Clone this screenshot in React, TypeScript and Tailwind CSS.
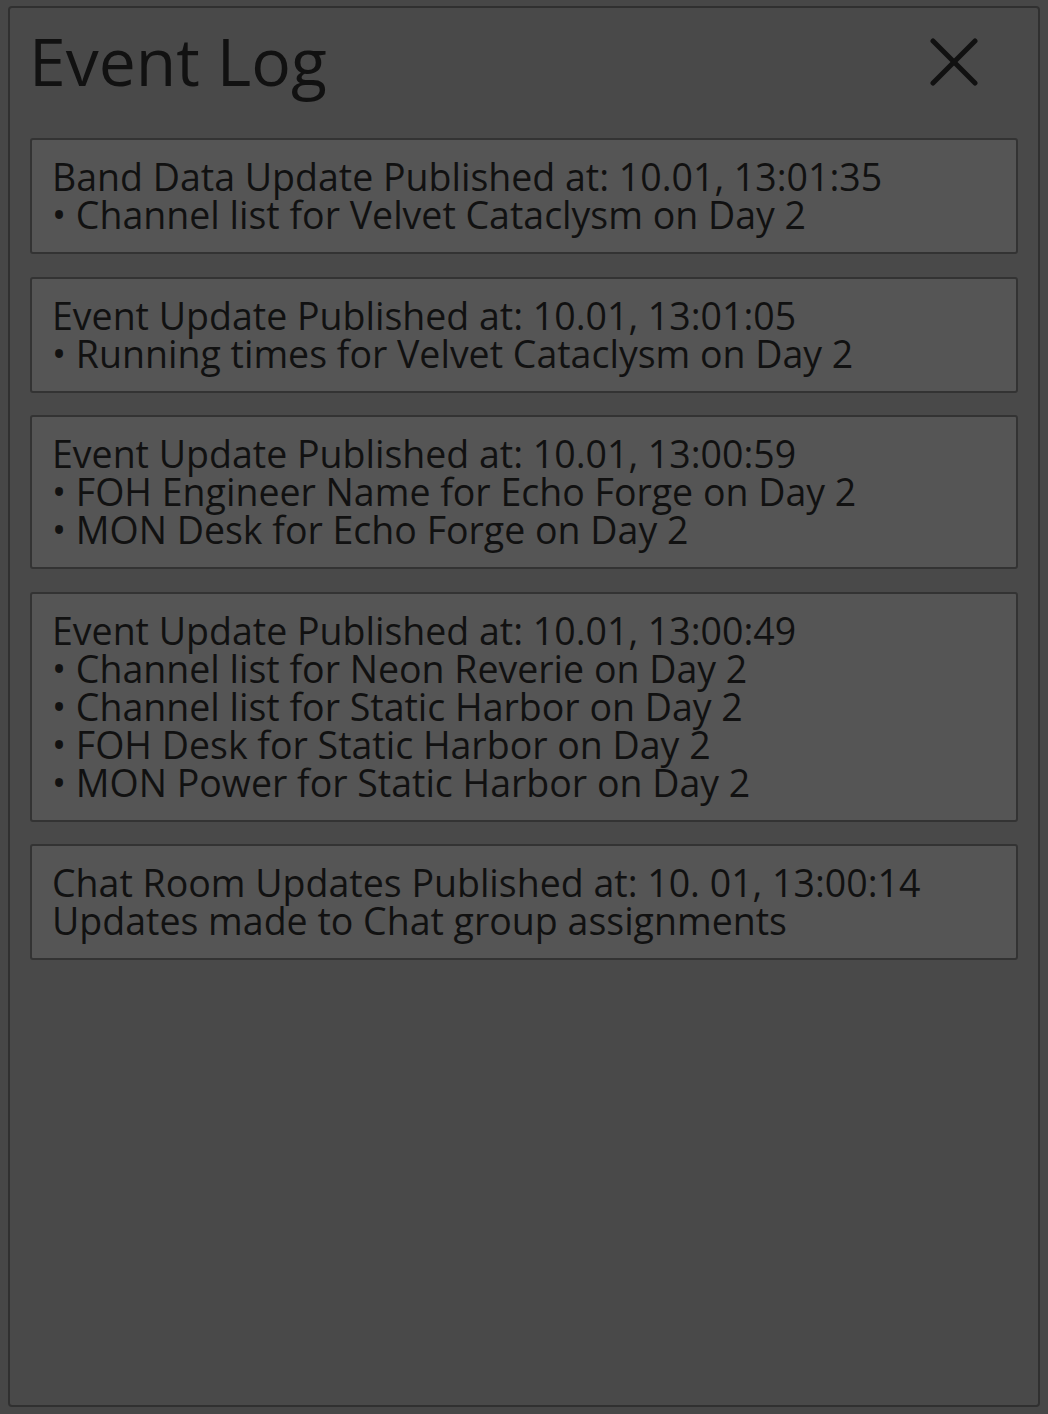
import React from "react";

const entries: { title: string; lines: string[] }[] = [
  {
    title: "Band Data Update Published at: 10.01, 13:01:35",
    lines: ["• Channel list for Velvet Cataclysm on Day 2"],
  },
  {
    title: "Event Update Published at: 10.01, 13:01:05",
    lines: ["• Running times for Velvet Cataclysm on Day 2"],
  },
  {
    title: "Event Update Published at: 10.01, 13:00:59",
    lines: ["• FOH Engineer Name for Echo Forge on Day 2", "• MON Desk for Echo Forge on Day 2"],
  },
  {
    title: "Event Update Published at: 10.01, 13:00:49",
    lines: [
      "• Channel list for Neon Reverie on Day 2",
      "• Channel list for Static Harbor on Day 2",
      "• FOH Desk for Static Harbor on Day 2",
      "• MON Power for Static Harbor on Day 2",
    ],
  },
  {
    title: "Chat Room Updates Published at: 10. 01, 13:00:14",
    lines: ["Updates made to Chat group assignments"],
  },
];

export default function App() {
  return (
    <div
      className="w-[1048px] h-[1414px] bg-[#474747] pt-[6px] pl-[8px] pr-[8px] pb-[7px] flex"
      style={{ fontFamily: '"Open Sans", "Noto Sans", sans-serif' }}
    >
      <div className="flex-1 flex flex-col bg-[#494949] border-2 border-[#303030] rounded-[4px] px-[20px]">
        <div className="h-[110px] flex items-center justify-between">
          <h1 className="text-[66px] leading-none text-[#111111] -ml-[1px] -mt-[7px]">Event Log</h1>
          <svg
            width="48"
            height="48"
            viewBox="0 0 48 48"
            className="mr-[40px] -mt-[2px]"
            stroke="#111111"
            strokeWidth="5"
            strokeLinecap="round"
          >
            <line x1="3" y1="3" x2="45" y2="45" />
            <line x1="45" y1="3" x2="3" y2="45" />
          </svg>
        </div>
        <div className="mt-[20px] flex flex-col gap-[22.5px]">
          {entries.map((e, i) => (
            <div
              key={i}
              className="bg-[#555555] border-2 border-[#333333] rounded-[3px] pl-[20px] pr-[20px] pt-[18px] pb-[18px] text-[37.5px] leading-[38px] text-[#111111]"
            >
              <div>{e.title}</div>
              {e.lines.map((l, j) => (
                <div key={j}>{l}</div>
              ))}
            </div>
          ))}
        </div>
      </div>
    </div>
  );
}
